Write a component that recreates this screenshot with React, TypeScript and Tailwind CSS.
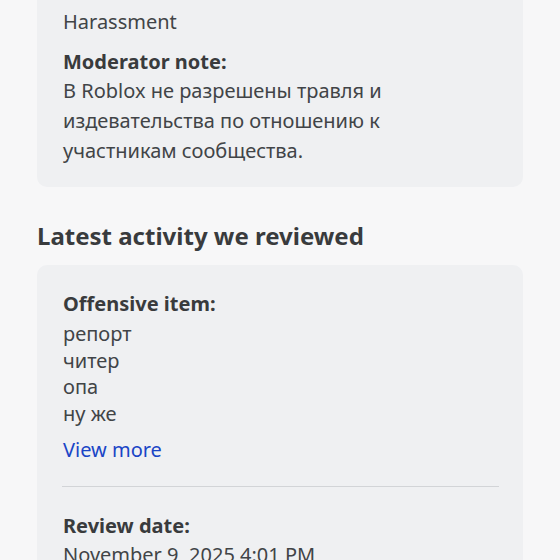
export default function App() {
  return (
    <div
      className="min-h-screen bg-[#f7f7f8] text-[#414447] overflow-hidden"
      style={{ fontFamily: '"Noto Sans", "Open Sans", sans-serif' }}
    >
      <div className="px-[37px] -mt-[45px] pb-10 flex flex-col">
        {/* Violation card */}
        <div className="rounded-[10px] bg-[#eff0f2] pl-[26px] pr-6 pt-6 pb-[21px]">
          <div className="text-[20px] font-bold text-[#393b3d] leading-[28px]">Reason:</div>
          <div className="text-[20px] leading-[30px]">Harassment</div>
          <div className="mt-[11px] text-[20px] font-bold text-[#393b3d] leading-[28px]">Moderator note:</div>
          <p className="text-[20px] leading-[30px] pr-10">
            В Roblox не разрешены травля и издевательства по отношению к участникам сообщества.
          </p>
        </div>

        <h2 className="mt-[33px] text-[24px] font-bold text-[#393b3d] leading-[32px]">
          Latest activity we reviewed
        </h2>

        {/* Activity card */}
        <div className="mt-[13px] rounded-[10px] bg-[#eff0f2] pl-[26px] pr-6 pt-[25px] pb-6">
          <div className="text-[20px] font-bold text-[#393b3d] leading-[28px]">Offensive item:</div>
          <ul className="mt-[3px] text-[20px] leading-[26.5px]">
            <li>репорт</li>
            <li>читер</li>
            <li>опа</li>
            <li>ну же</li>
          </ul>
          <button className="mt-[9px] text-[20px] leading-[28px] text-[#1a45c6]">View more</button>
          <div className="mt-[22px] -ml-[1px] h-px bg-[#d2d4d7]" />
          <div className="mt-[25px] text-[20px] font-bold text-[#393b3d] leading-[28px]">Review date:</div>
          <div className="text-[20px] leading-[30px]">November 9, 2025 4:01 PM</div>
        </div>
      </div>
    </div>
  );
}
